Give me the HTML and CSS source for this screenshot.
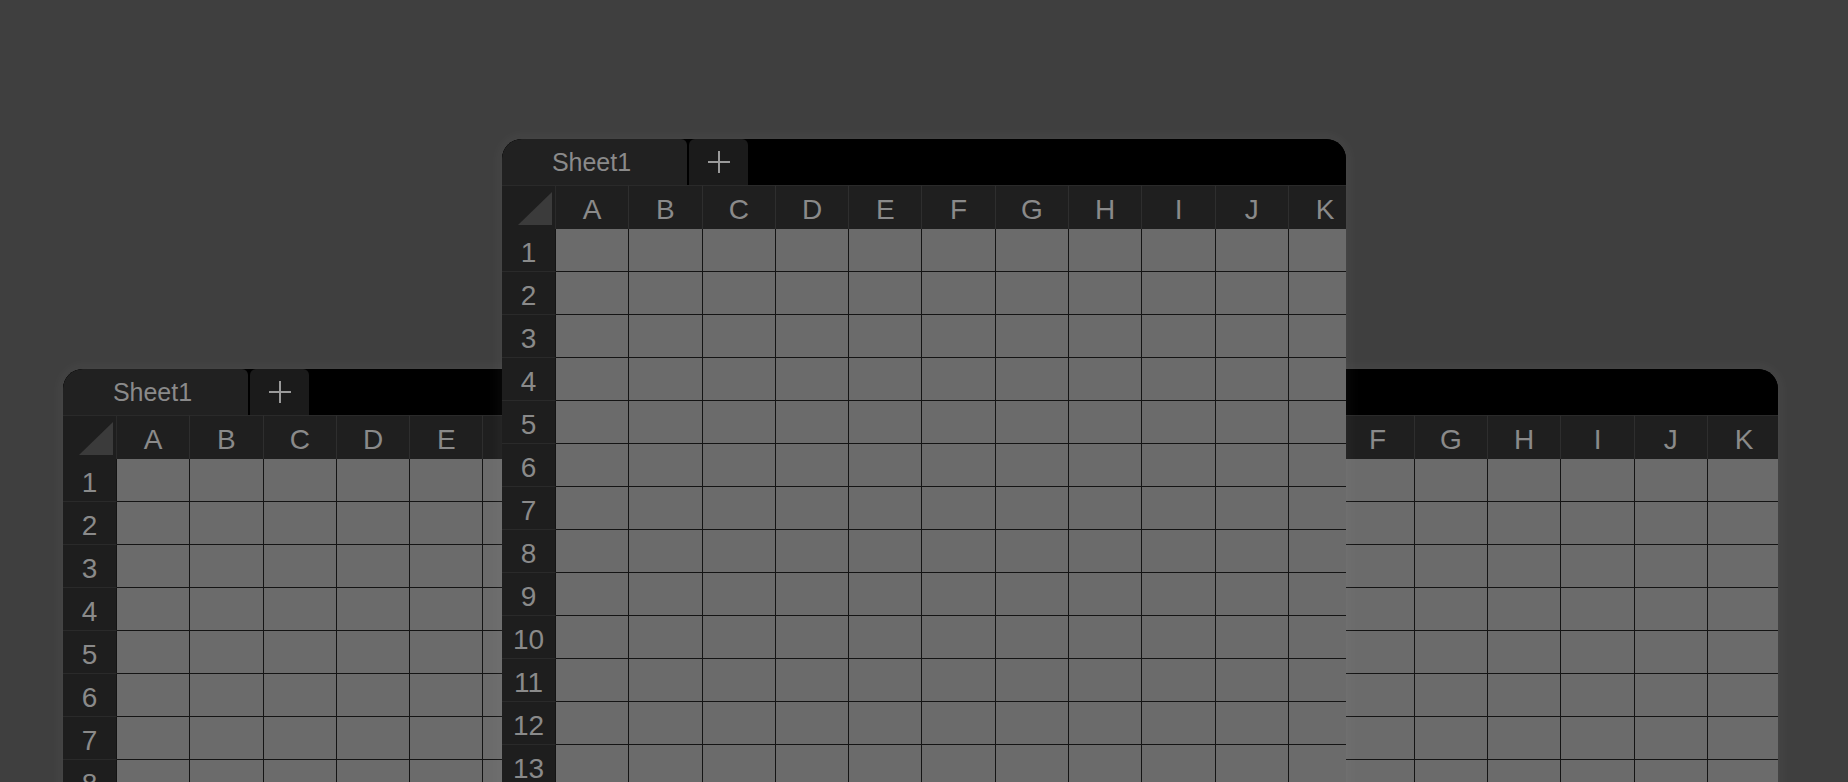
FILE: index.html
```html
<!DOCTYPE html>
<html lang="en">
<head>
<meta charset="utf-8">
<title>Sheets</title>
<link rel="stylesheet" href="styles.css">
</head>
<body>
<div class="stage">
  <div class="back">
    <section class="sheet">
      <div class="tabbar">
        <div class="tab">Sheet1</div>
        <div class="add"><svg width="24" height="24" viewBox="0 0 24 24"><path d="M12 1v22M1 12h22" stroke="#9a9a9a" stroke-width="2" fill="none"/></svg></div>
      </div>
      <div class="grid">
        <div class="corner"><span class="tri"></span></div>
        <div class="ch">A</div><div class="ch">B</div><div class="ch">C</div><div class="ch">D</div><div class="ch">E</div><div class="ch">F</div><div class="ch">G</div><div class="ch">H</div><div class="ch">I</div><div class="ch">J</div><div class="ch">K</div>
        <div class="rh">1</div><i></i><i></i><i></i><i></i><i></i><i></i><i></i><i></i><i></i><i></i><i></i>
        <div class="rh">2</div><i></i><i></i><i></i><i></i><i></i><i></i><i></i><i></i><i></i><i></i><i></i>
        <div class="rh">3</div><i></i><i></i><i></i><i></i><i></i><i></i><i></i><i></i><i></i><i></i><i></i>
        <div class="rh">4</div><i></i><i></i><i></i><i></i><i></i><i></i><i></i><i></i><i></i><i></i><i></i>
        <div class="rh">5</div><i></i><i></i><i></i><i></i><i></i><i></i><i></i><i></i><i></i><i></i><i></i>
        <div class="rh">6</div><i></i><i></i><i></i><i></i><i></i><i></i><i></i><i></i><i></i><i></i><i></i>
        <div class="rh">7</div><i></i><i></i><i></i><i></i><i></i><i></i><i></i><i></i><i></i><i></i><i></i>
        <div class="rh">8</div><i></i><i></i><i></i><i></i><i></i><i></i><i></i><i></i><i></i><i></i><i></i>
      </div>
    </section>
    <section class="sheet">
      <div class="tabbar">
        <div class="tab">Sheet1</div>
        <div class="add"><svg width="24" height="24" viewBox="0 0 24 24"><path d="M12 1v22M1 12h22" stroke="#9a9a9a" stroke-width="2" fill="none"/></svg></div>
      </div>
      <div class="grid">
        <div class="corner"><span class="tri"></span></div>
        <div class="ch">A</div><div class="ch">B</div><div class="ch">C</div><div class="ch">D</div><div class="ch">E</div><div class="ch">F</div><div class="ch">G</div><div class="ch">H</div><div class="ch">I</div><div class="ch">J</div><div class="ch">K</div>
        <div class="rh">1</div><i></i><i></i><i></i><i></i><i></i><i></i><i></i><i></i><i></i><i></i><i></i>
        <div class="rh">2</div><i></i><i></i><i></i><i></i><i></i><i></i><i></i><i></i><i></i><i></i><i></i>
        <div class="rh">3</div><i></i><i></i><i></i><i></i><i></i><i></i><i></i><i></i><i></i><i></i><i></i>
        <div class="rh">4</div><i></i><i></i><i></i><i></i><i></i><i></i><i></i><i></i><i></i><i></i><i></i>
        <div class="rh">5</div><i></i><i></i><i></i><i></i><i></i><i></i><i></i><i></i><i></i><i></i><i></i>
        <div class="rh">6</div><i></i><i></i><i></i><i></i><i></i><i></i><i></i><i></i><i></i><i></i><i></i>
        <div class="rh">7</div><i></i><i></i><i></i><i></i><i></i><i></i><i></i><i></i><i></i><i></i><i></i>
        <div class="rh">8</div><i></i><i></i><i></i><i></i><i></i><i></i><i></i><i></i><i></i><i></i><i></i>
      </div>
    </section>
  </div>

  <section class="sheet front">
    <div class="tabbar">
      <div class="tab">Sheet1</div>
      <div class="add"><svg width="24" height="24" viewBox="0 0 24 24"><path d="M12 1v22M1 12h22" stroke="#9a9a9a" stroke-width="2" fill="none"/></svg></div>
    </div>
    <div class="grid">
      <div class="corner"><span class="tri"></span></div>
      <div class="ch">A</div><div class="ch">B</div><div class="ch">C</div><div class="ch">D</div><div class="ch">E</div><div class="ch">F</div><div class="ch">G</div><div class="ch">H</div><div class="ch">I</div><div class="ch">J</div><div class="ch">K</div>
      <div class="rh">1</div><i></i><i></i><i></i><i></i><i></i><i></i><i></i><i></i><i></i><i></i><i></i>
      <div class="rh">2</div><i></i><i></i><i></i><i></i><i></i><i></i><i></i><i></i><i></i><i></i><i></i>
      <div class="rh">3</div><i></i><i></i><i></i><i></i><i></i><i></i><i></i><i></i><i></i><i></i><i></i>
      <div class="rh">4</div><i></i><i></i><i></i><i></i><i></i><i></i><i></i><i></i><i></i><i></i><i></i>
      <div class="rh">5</div><i></i><i></i><i></i><i></i><i></i><i></i><i></i><i></i><i></i><i></i><i></i>
      <div class="rh">6</div><i></i><i></i><i></i><i></i><i></i><i></i><i></i><i></i><i></i><i></i><i></i>
      <div class="rh">7</div><i></i><i></i><i></i><i></i><i></i><i></i><i></i><i></i><i></i><i></i><i></i>
      <div class="rh">8</div><i></i><i></i><i></i><i></i><i></i><i></i><i></i><i></i><i></i><i></i><i></i>
      <div class="rh">9</div><i></i><i></i><i></i><i></i><i></i><i></i><i></i><i></i><i></i><i></i><i></i>
      <div class="rh">10</div><i></i><i></i><i></i><i></i><i></i><i></i><i></i><i></i><i></i><i></i><i></i>
      <div class="rh">11</div><i></i><i></i><i></i><i></i><i></i><i></i><i></i><i></i><i></i><i></i><i></i>
      <div class="rh">12</div><i></i><i></i><i></i><i></i><i></i><i></i><i></i><i></i><i></i><i></i><i></i>
      <div class="rh">13</div><i></i><i></i><i></i><i></i><i></i><i></i><i></i><i></i><i></i><i></i><i></i>
    </div>
  </section>
</div>
</body>
</html>
```

FILE: styles.css
```css
html, body {
  margin: 0;
  padding: 0;
  background: #3f3f3f;
  height: 782px;
  overflow: hidden;
}

body {
  font-family: "Liberation Sans", Arial, Helvetica, sans-serif;
}

.stage {
  position: relative;
  height: 782px;
  overflow: hidden;
}

.back {
  display: flex;
  gap: 1px;
  padding: 369px 0 0 63px;
}

.sheet {
  flex: none;
  width: 857px;
  height: 480px;
  background: #000;
  border-radius: 20px 20px 0 0;
  overflow: hidden;
  box-shadow: 0 0 14px 3px rgba(255, 255, 255, 0.045);
}

.sheet.front {
  position: absolute;
  left: 502px;
  top: 139px;
  width: 844px;
  height: 700px;
}

.tabbar {
  height: 46px;
  display: flex;
  gap: 2px;
  background: #000;
}

.tab {
  width: 185px;
  background: #212121;
  border-radius: 0 6px 0 0;
  display: flex;
  align-items: center;
  justify-content: center;
  font-size: 25px;
  color: #8a8a8a;
  padding-right: 6px;
  box-sizing: border-box;
}

.add {
  width: 59px;
  background: #1b1b1b;
  border-radius: 6px 6px 0 0;
  display: flex;
  align-items: center;
  justify-content: center;
}

.grid {
  display: grid;
  grid-template-columns: 54px repeat(11, 73.3px);
  grid-template-rows: 44px;
  grid-auto-rows: 43px;
  width: max-content;
}

.corner {
  background: #1e1e1e;
  border-top: 1px solid #2a2a2a;
  border-right: 1px solid #2a2a2a;
  box-sizing: border-box;
  display: flex;
  align-items: flex-end;
  justify-content: flex-end;
  padding: 0 3px 4px 0;
}

.tri {
  display: block;
  width: 34px;
  height: 33px;
  background: #3b3b3b;
  clip-path: polygon(100% 0, 100% 100%, 0 100%);
}

.ch {
  background: #1f1f1f;
  border-top: 1px solid #2a2a2a;
  border-right: 1px solid #2e2e2e;
  box-sizing: border-box;
  display: flex;
  align-items: center;
  justify-content: center;
  padding-top: 4px;
  font-size: 28px;
  color: #8a8a8a;
}

.rh {
  background: #1e1e1e;
  border-bottom: 1px solid #2a2a2a;
  border-right: 1px solid #141414;
  box-sizing: border-box;
  display: flex;
  align-items: center;
  justify-content: center;
  padding-top: 5px;
  font-size: 28px;
  color: #8a8a8a;
}

.grid i {
  display: block;
  background: #6b6b6b;
  border-right: 1px solid #141414;
  border-bottom: 1px solid #141414;
  box-sizing: border-box;
}
```
